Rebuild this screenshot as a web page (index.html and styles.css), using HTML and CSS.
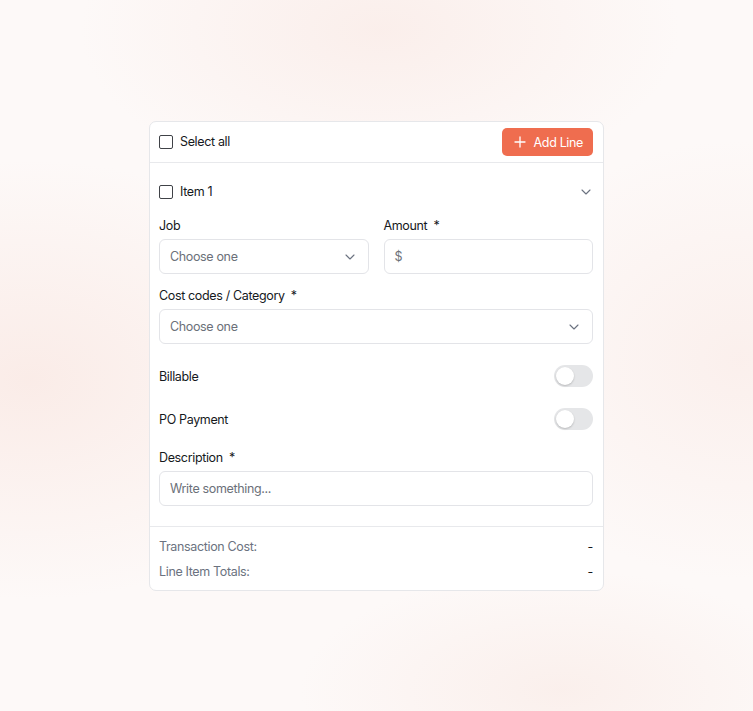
FILE: index.html
```html
<!DOCTYPE html>
<html lang="en">
<head>
  <meta charset="UTF-8">
  <title>Line Items</title>
  <meta name="viewport" content="width=device-width, initial-scale=1">
  <link rel="stylesheet" href="styles.css">
</head>
<body>
  <div class="page">
    <div class="card">
      <div class="card-head">
        <label class="check">
          <span class="box"></span>
          <span>Select all</span>
        </label>
        <button class="add-btn" type="button">
          <svg width="12" height="12" viewBox="0 0 12 12"><path d="M6 1v10M1 6h10" stroke="#fff" stroke-width="1.3" stroke-linecap="round"/></svg>
          <span>Add Line</span>
        </button>
      </div>

      <div class="item">
        <div class="item-head">
          <label class="check">
            <span class="box"></span>
            <span>Item 1</span>
          </label>
          <svg class="chev" width="10" height="6" viewBox="0 0 10 6"><path d="M1 1l4 4 4-4" fill="none" stroke="#6b7280" stroke-width="1.1" stroke-linecap="round" stroke-linejoin="round"/></svg>
        </div>

        <div class="row-2">
          <div class="field">
            <div class="label">Job</div>
            <div class="control">
              <span class="placeholder">Choose one</span>
              <svg class="chev" width="10" height="6" viewBox="0 0 10 6"><path d="M1 1l4 4 4-4" fill="none" stroke="#6b7280" stroke-width="1.1" stroke-linecap="round" stroke-linejoin="round"/></svg>
            </div>
          </div>
          <div class="field">
            <div class="label">Amount <span class="req">*</span></div>
            <div class="control">
              <span class="placeholder">$</span>
            </div>
          </div>
        </div>

        <div class="field">
          <div class="label">Cost codes / Category <span class="req">*</span></div>
          <div class="control">
            <span class="placeholder">Choose one</span>
            <svg class="chev" width="10" height="6" viewBox="0 0 10 6"><path d="M1 1l4 4 4-4" fill="none" stroke="#6b7280" stroke-width="1.1" stroke-linecap="round" stroke-linejoin="round"/></svg>
          </div>
        </div>

        <div class="switch-row first">
          <span>Billable</span>
          <span class="toggle"><span class="knob"></span></span>
        </div>
        <div class="switch-row">
          <span>PO Payment</span>
          <span class="toggle"><span class="knob"></span></span>
        </div>

        <div class="field desc">
          <div class="label">Description <span class="req">*</span></div>
          <div class="control">
            <span class="placeholder">Write something...</span>
          </div>
        </div>
      </div>

      <div class="totals">
        <div class="total-row"><span>Transaction Cost:</span><span class="dash">-</span></div>
        <div class="total-row"><span>Line Item Totals:</span><span class="dash">-</span></div>
      </div>
    </div>
  </div>
</body>
</html>
```

FILE: styles.css
```css
html, body {
  margin: 0;
  padding: 0;
}

body {
  font-family: Inter, "Liberation Sans", sans-serif;
  font-size: 12.5px;
  letter-spacing: -0.35px;
  color: #16191d;
  background-color: #fdf9f8;
  background-image:
    radial-gradient(ellipse 320px 220px at 30px 380px, rgba(248, 225, 218, 0.55), transparent),
    radial-gradient(ellipse 300px 160px at 380px 30px, rgba(248, 228, 222, 0.5), transparent),
    radial-gradient(ellipse 260px 220px at 740px 360px, rgba(248, 228, 222, 0.45), transparent),
    radial-gradient(ellipse 260px 120px at 560px 690px, rgba(248, 230, 224, 0.5), transparent);
  min-height: 711px;
}

.page {
  padding-top: 121px;
  display: flex;
  justify-content: center;
}

.card {
  width: 453px;
  background: #fff;
  border: 1px solid #e6e7ea;
  border-radius: 7px;
}

.card-head {
  display: flex;
  align-items: center;
  justify-content: space-between;
  height: 40px;
  padding: 0 10px 0 9px;
  border-bottom: 1px solid #e8e9ec;
}

.check {
  display: flex;
  align-items: center;
  gap: 7px;
  line-height: 16px;
}

.box {
  width: 12px;
  height: 12px;
  border: 1.5px solid #3f4247;
  border-radius: 2px;
}

.add-btn {
  display: flex;
  align-items: center;
  gap: 8px;
  height: 28px;
  padding: 0 10px 0 12px;
  border: none;
  border-radius: 5px;
  background: #ef6d4f;
  color: #fff;
  font-family: inherit;
  font-size: 12.5px;
  letter-spacing: -0.35px;
}

.item {
  padding: 16px 10px 20px 9px;
  border-bottom: 1px solid #e8e9ec;
}

.item-head {
  display: flex;
  align-items: center;
  justify-content: space-between;
  height: 26px;
  padding-right: 2px;
  margin-bottom: 13px;
}

.row-2 {
  display: grid;
  grid-template-columns: 1fr 1fr;
  gap: 15px;
  margin-bottom: 14px;
}

.label {
  line-height: 16px;
  margin-bottom: 5px;
}

.req {
  margin-left: 3px;
}

.control {
  display: flex;
  align-items: center;
  justify-content: space-between;
  height: 33px;
  padding: 0 13px 0 10px;
  border: 1px solid #e3e4e8;
  border-radius: 6px;
}

.placeholder {
  color: #6b7079;
}

.switch-row {
  display: flex;
  align-items: center;
  justify-content: space-between;
  height: 22px;
}

.switch-row.first {
  margin-top: 21px;
  margin-bottom: 21px;
}

.toggle {
  width: 39px;
  height: 22px;
  border-radius: 11px;
  background: #e5e6e8;
  position: relative;
}

.knob {
  position: absolute;
  left: 2px;
  top: 2px;
  width: 18px;
  height: 18px;
  border-radius: 50%;
  background: #fff;
  box-shadow: 0 1px 2px rgba(0, 0, 0, 0.2);
}

.desc {
  margin-top: 20px;
}

.totals {
  padding: 12px 10px 10px 9px;
}

.total-row {
  display: flex;
  justify-content: space-between;
  color: #6b7280;
  line-height: 16px;
}

.total-row + .total-row {
  margin-top: 9px;
}

.dash {
  color: #16191d;
}
```
